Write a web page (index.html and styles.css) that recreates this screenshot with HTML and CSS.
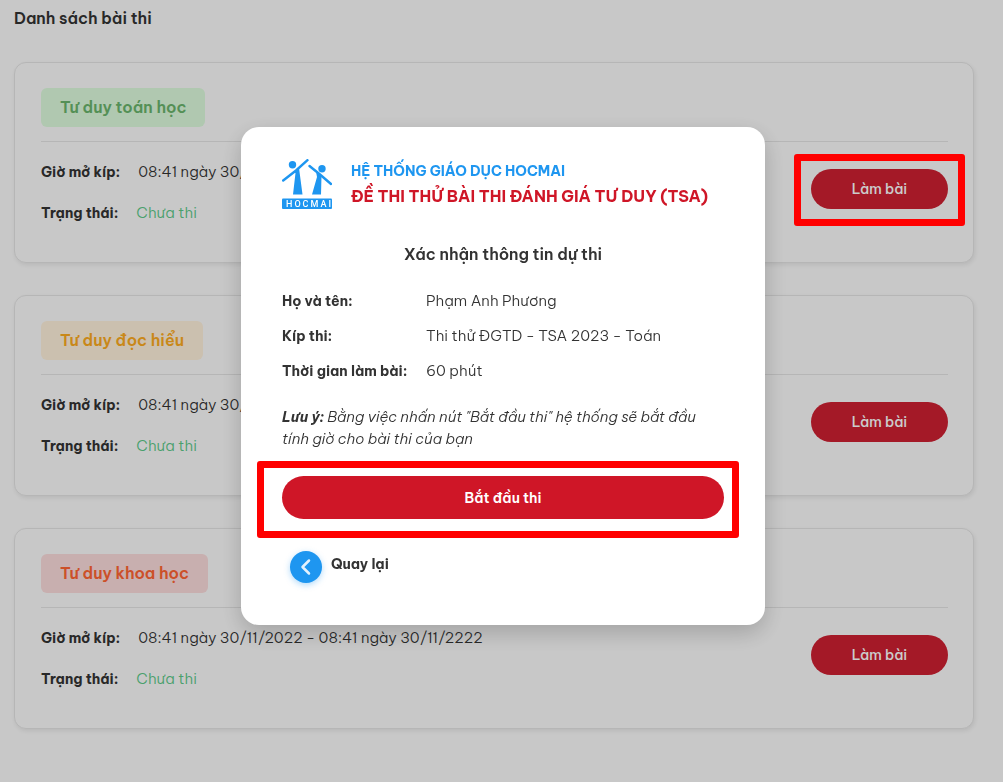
FILE: index.html
```html
<!DOCTYPE html>
<html lang="vi">
<head>
    <meta charset="UTF-8">
    <meta name="viewport" content="width=device-width, initial-scale=1">
    <title>Danh sách bài thi</title>
    <link rel="stylesheet" href="styles.css">
</head>
<body>
    <main class="page">
        <h1 class="page-title">Danh sách bài thi</h1>

        <div class="exam-list">
            <section class="exam">
                <div class="exam-head">
                    <h2 class="tag tag-math">Tư duy toán học</h2>
                </div>
                <div class="exam-body">
                    <dl class="exam-info">
                        <div class="exam-row"><dt>Giờ mở kíp:</dt><dd>08:41 ngày 30/11/2022 - 08:41 ngày 30/11/2222</dd></div>
                        <div class="exam-row"><dt>Trạng thái:</dt><dd class="status">Chưa thi</dd></div>
                    </dl>
                    <div class="exam-action marked">
                        <button type="button" class="btn btn-open">Làm bài</button>
                    </div>
                </div>
            </section>

            <section class="exam">
                <div class="exam-head">
                    <h2 class="tag tag-reading">Tư duy đọc hiểu</h2>
                </div>
                <div class="exam-body">
                    <dl class="exam-info">
                        <div class="exam-row"><dt>Giờ mở kíp:</dt><dd>08:41 ngày 30/11/2022 - 08:41 ngày 30/11/2222</dd></div>
                        <div class="exam-row"><dt>Trạng thái:</dt><dd class="status">Chưa thi</dd></div>
                    </dl>
                    <div class="exam-action">
                        <button type="button" class="btn btn-open">Làm bài</button>
                    </div>
                </div>
            </section>

            <section class="exam">
                <div class="exam-head">
                    <h2 class="tag tag-science">Tư duy khoa học</h2>
                </div>
                <div class="exam-body">
                    <dl class="exam-info">
                        <div class="exam-row"><dt>Giờ mở kíp:</dt><dd>08:41 ngày 30/11/2022 - 08:41 ngày 30/11/2222</dd></div>
                        <div class="exam-row"><dt>Trạng thái:</dt><dd class="status">Chưa thi</dd></div>
                    </dl>
                    <div class="exam-action">
                        <button type="button" class="btn btn-open">Làm bài</button>
                    </div>
                </div>
            </section>
        </div>
    </main>

    <div class="overlay">
        <div class="modal" role="dialog" aria-modal="true" aria-labelledby="modal-title">
            <div class="brand">
                <svg class="brand-logo" viewBox="0 0 50 50" aria-hidden="true">
                    <g fill="#1e96f0">
                        <circle cx="10.500" cy="5.800" r="3.700"/>
                        <circle cx="40" cy="9.800" r="3.700"/>
                        <path d="M11.500 13 17 9 20.500 35.500H11L13.500 14Z"/>
                        <path d="M34 12.500 39.500 17 39 35.500H30L35 18Z"/>
                        <rect y="39.500" width="50" height="10.500" rx="1"/>
                    </g>
                    <g fill="none" stroke="#1e96f0" stroke-width="2.400" stroke-linecap="round">
                        <path d="M1.200 21.500 14 11.500 25.500 1.200"/>
                        <path d="M27.500 7 38 15.500 49 25"/>
                    </g>
                    <text class="logo-text" x="4" y="48">HOCMAI</text>
                </svg>
                <div class="brand-text">
                    <p class="brand-name">HỆ THỐNG GIÁO DỤC HOCMAI</p>
                    <p class="brand-exam">ĐỀ THI THỬ BÀI THI ĐÁNH GIÁ TƯ DUY (TSA)</p>
                </div>
            </div>

            <h2 class="modal-title" id="modal-title">Xác nhận thông tin dự thi</h2>

            <dl class="confirm">
                <dt>Họ và tên:</dt><dd>Phạm Anh Phương</dd>
                <dt>Kíp thi:</dt><dd>Thi thử ĐGTD - TSA 2023 - Toán</dd>
                <dt>Thời gian làm bài:</dt><dd>60 phút</dd>
            </dl>

            <p class="note"><strong>Lưu ý:</strong> Bằng việc nhấn nút "Bắt đầu thi" hệ thống sẽ bắt đầu tính giờ cho bài thi của bạn</p>

            <div class="start marked">
                <button type="button" class="btn btn-start">Bắt đầu thi</button>
            </div>

            <button type="button" class="back">
                <span class="back-icon">
                    <svg viewBox="0 0 32 32" aria-hidden="true"><path d="M19 9.500 12.500 16 19 22.500"/></svg>
                </span>
                <span>Quay lại</span>
            </button>
        </div>
    </div>
</body>
</html>
```
FILE: styles.css
```css
* {
    box-sizing: border-box;
}
body {
    margin: 0;
    font-family: "Be Vietnam Pro", Inter, "Noto Sans", sans-serif;
    font-size: 14px;
    color: #333333;
    background-color: #fafafa;
}
h1, h2, p, dl, dd {
    margin: 0;
}
dt {
    font-weight: 700;
}
dd {
    font-size: 15px;
    font-weight: 300;
}
button {
    font-family: inherit;
    cursor: pointer;
}

/* exam list */
.page {
    padding: 6px 29px 52px 14px;
}
.page-title {
    font-size: 16px;
    line-height: 24px;
    font-weight: 600;
}
.exam-list {
    display: flex;
    flex-direction: column;
    gap: 32px;
    margin-top: 32px;
}
.exam {
    padding: 25px 25px 25px 26px;
    border: 1px solid #e4e4e4;
    border-radius: 12px;
    background-color: #fbfbfb;
    box-shadow: 1px 2px 4px rgba(0,0,0,0.08);
}
.exam-head {
    padding-bottom: 14px;
    border-bottom: 1px solid #e4e4e4;
}
.tag {
    width: fit-content;
    padding: 0 19px;
    border-radius: 6px;
    font-size: 16px;
    line-height: 39px;
    font-weight: 600;
}
.tag-math {
    color: #6ab46c;
    background-color: #dcfadc;
}
.tag-reading {
    color: #fcaa1e;
    background-color: #fef0db;
}
.tag-science {
    color: #ff6432;
    background-color: #fadbdb;
}
.exam-body {
    display: flex;
    justify-content: space-between;
    padding-top: 17px;
}
.exam-info {
    display: flex;
    flex-direction: column;
    gap: 16px;
    padding-bottom: 12px;
}
.exam-row {
    display: flex;
    align-items: baseline;
    gap: 18px;
    height: 25px;
    line-height: 25px;
}
.status {
    color: #5cc888;
}
.exam-action {
    align-self: flex-start;
    margin-top: 10px;
}

.btn {
    display: block;
    border: 0;
    border-radius: 22px;
    color: #ffffff;
    background-color: #cf1627;
}
.btn-open {
    width: 137px;
    height: 40px;
    font-size: 14px;
    font-weight: 500;
    background-color: #cd2031;
}
.btn-start {
    width: 100%;
    height: 43px;
    font-size: 14px;
    font-weight: 600;
}

/* red frame round the button to press */
.marked {
    position: relative;
}
.marked::after {
    content: "";
    position: absolute;
    inset: -15px -17px -17px;
    z-index: 20;
    border: 7px solid #ff0000;
    border-radius: 3px;
    pointer-events: none;
}
.start.marked::after {
    inset: -15px -15px -19px -25px;
}

/* confirm dialog */
.overlay {
    position: fixed;
    inset: 0;
    z-index: 10;
    display: flex;
    justify-content: center;
    align-items: flex-start;
    padding: 127px 14px 14px 17px;
    background-color: rgba(0,0,0,0.2);
}
.modal {
    width: 100%;
    max-width: 524px;
    padding: 32px 41px 42px;
    border-radius: 18px;
    background-color: #ffffff;
    box-shadow: 0 8px 24px rgba(0,0,0,0.2);
}
.brand {
    display: flex;
    gap: 19px;
}
.brand-logo {
    width: 50px;
    height: 50px;
    flex: none;
}
.logo-text {
    font-family: Roboto, sans-serif;
    font-size: 9px;
    font-weight: 500;
    letter-spacing: 2px;
    fill: #ffffff;
}
.brand-text {
    line-height: 25px;
    white-space: nowrap;
}
.brand-name {
    font-size: 14px;
    font-weight: 700;
    color: #1e96f0;
}
.brand-exam {
    font-size: 16px;
    font-weight: 700;
    color: #cf1627;
}
.modal-title {
    margin-top: 33px;
    font-size: 16px;
    line-height: 24px;
    font-weight: 600;
    text-align: center;
}
.confirm {
    display: grid;
    grid-template-columns: 144px 1fr;
    row-gap: 13px;
    margin-top: 24px;
    line-height: 22px;
}
.note {
    margin-top: 24px;
    padding-right: 20px;
    font-size: 15px;
    line-height: 22px;
    font-style: italic;
    font-weight: 300;
}
.note strong {
    font-size: 14px;
    font-weight: 700;
}
.start {
    margin-top: 26px;
}
.back {
    display: flex;
    gap: 9px;
    margin: 32px 0 0 8px;
    padding: 0;
    border: 0;
    background: none;
    color: #333333;
    font-size: 14px;
    font-weight: 700;
    line-height: 26px;
}
.back-icon {
    width: 32px;
    height: 32px;
    border-radius: 50%;
    background-color: #1e96f0;
    box-shadow: 0 2px 6px rgba(30,150,240,0.35);
}
.back-icon svg {
    display: block;
    fill: none;
    stroke: #e4f2fd;
    stroke-width: 2.5;
    stroke-linecap: round;
    stroke-linejoin: round;
}
```
